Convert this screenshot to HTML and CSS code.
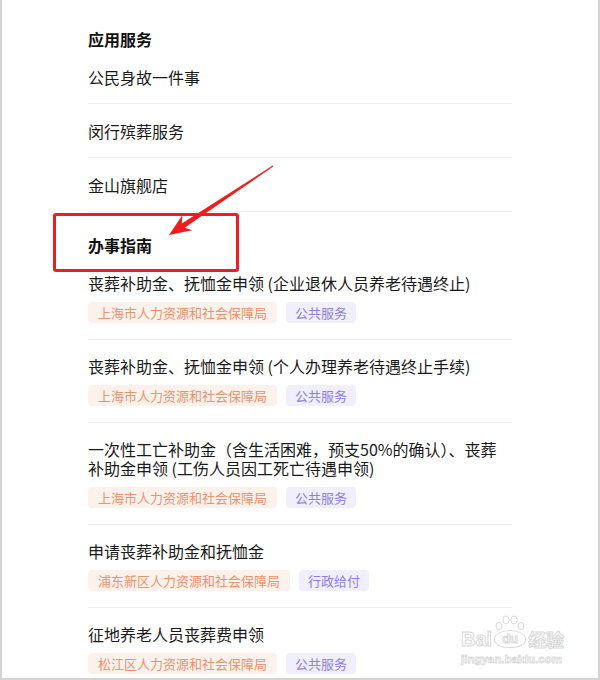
FILE: index.html
```html
<!DOCTYPE html>
<html lang="zh-CN">

<head>
    <meta charset="UTF-8">
    <meta name="viewport" content="width=device-width, initial-scale=1.0">
    <title>应用服务 / 办事指南</title>
    <link rel="stylesheet" href="styles.css">
</head>

<body>
    <div id="frame">
        <div class="section">
            <h2>应用服务</h2>
            <div class="list">
                <div class="row">公民身故一件事</div>
                <div class="row">闵行殡葬服务</div>
                <div class="row">金山旗舰店</div>
            </div>
        </div>
        <div class="section guides">
            <h2>办事指南</h2>
            <div class="list">
                <div class="guide">
                    <div class="title">丧葬补助金、抚恤金申领 (企业退休人员养老待遇终止)</div>
                    <div class="tags">
                        <span class="tag dept">上海市人力资源和社会保障局</span>
                        <span class="tag kind">公共服务</span>
                    </div>
                </div>
                <div class="guide">
                    <div class="title">丧葬补助金、抚恤金申领 (个人办理养老待遇终止手续)</div>
                    <div class="tags">
                        <span class="tag dept">上海市人力资源和社会保障局</span>
                        <span class="tag kind">公共服务</span>
                    </div>
                </div>
                <div class="guide">
                    <div class="title">一次性工亡补助金（含生活困难，预支50%的确认）、丧葬补助金申领 (工伤人员因工死亡待遇申领)</div>
                    <div class="tags">
                        <span class="tag dept">上海市人力资源和社会保障局</span>
                        <span class="tag kind">公共服务</span>
                    </div>
                </div>
                <div class="guide">
                    <div class="title">申请丧葬补助金和抚恤金</div>
                    <div class="tags">
                        <span class="tag dept">浦东新区人力资源和社会保障局</span>
                        <span class="tag kind">行政给付</span>
                    </div>
                </div>
                <div class="guide">
                    <div class="title">征地养老人员丧葬费申领</div>
                    <div class="tags">
                        <span class="tag dept">松江区人力资源和社会保障局</span>
                        <span class="tag kind">公共服务</span>
                    </div>
                </div>
            </div>
        </div>

        <!-- markup added on top of the screenshot -->
        <div class="highlight"></div>
        <svg class="arrow" width="600" height="680" viewBox="0 0 600 680">
            <polygon points="272.7,165.5 181.8,223.5 182.3,215.3 169,235 192.3,230.3 184.6,227.7 273.3,166.5" fill="#f21c1c" />
        </svg>

        <div class="watermark">
            <div class="brand">
                <span>Bai</span>
                <span class="paw">
                    <svg class="toes" width="30" height="16" viewBox="0 0 30 16">
                        <ellipse cx="4" cy="11" rx="3" ry="3.5" />
                        <ellipse cx="11" cy="5" rx="3.2" ry="4" />
                        <ellipse cx="19" cy="5" rx="3.2" ry="4" />
                        <ellipse cx="26" cy="11" rx="3" ry="3.5" />
                    </svg>
                    du
                </span>
                <span class="cn">经验</span>
            </div>
            <div class="url">jingyan.baidu.com</div>
        </div>
    </div>
</body>

</html>
```

FILE: styles.css
```css
body {
    margin: 0;
    background-color: #fff;
    font-family: "Noto Sans CJK SC", "Noto Sans", sans-serif;
    color: #1a1a1a;
}

#frame {
    position: relative;
    height: 680px;
    box-sizing: border-box;
    overflow: hidden;
    padding: 6px 86px 0;
    border: 2px solid #d4d4d4;
    border-top: none;
}

.section h2 {
    margin: 0;
    padding: 22px 0 0;
    font-size: 16px;
    line-height: 22px;
    font-weight: 700;
    color: #111;
}

.guides h2 {
    padding-bottom: 1px;
}

.list {
    display: flex;
    flex-direction: column;
}

.row {
    padding: 16px 0 15px;
    font-size: 16px;
    line-height: 22px;
    border-bottom: 1px solid #f0f0f0;
}

.guide {
    display: flex;
    flex-direction: column;
    gap: 9px;
    padding: 17px 0 16px;
    border-bottom: 1px solid #f0f0f0;
}

.guide .title {
    font-size: 16px;
    line-height: 19px;
}

.tags {
    display: flex;
    gap: 9px;
}

.tag {
    padding: 0 10px;
    font-size: 13px;
    line-height: 21px;
    border-radius: 4px;
}

.tag.dept {
    background-color: #fdf1ec;
    color: #ea936f;
}

.tag.kind {
    padding: 0 9px;
    background-color: #f1effd;
    color: #8c80e4;
}

.highlight {
    position: absolute;
    left: 51px;
    top: 213px;
    width: 180px;
    height: 53px;
    border: 3px solid #f21c1c;
    border-radius: 3px;
}

.arrow {
    position: absolute;
    left: -2px;
    top: 0;
    pointer-events: none;
}

.watermark {
    position: absolute;
    left: 459px;
    top: 628px;
    font-family: "Liberation Sans", sans-serif;
    font-weight: 700;
    color: #fff;
    -webkit-text-stroke: 1px #d9d9d9;
}

.watermark .brand {
    display: flex;
    align-items: center;
    gap: 2px;
    font-size: 20px;
    line-height: 22px;
}

.watermark .paw {
    position: relative;
    width: 30px;
    height: 16px;
    font-size: 13px;
    line-height: 15px;
    text-align: center;
    border: 1px solid #d9d9d9;
    border-radius: 50% 50% 45% 45%;
}

.watermark .toes {
    position: absolute;
    left: 0;
    top: -16px;
    fill: #fff;
    stroke: #d9d9d9;
    stroke-width: 1;
}

.watermark .cn {
    font-family: "Noto Sans CJK SC", sans-serif;
    font-size: 18px;
}

.watermark .url {
    margin-top: 3px;
    font-size: 11.5px;
    line-height: 13px;
    -webkit-text-stroke: .8px #d9d9d9;
}
```
